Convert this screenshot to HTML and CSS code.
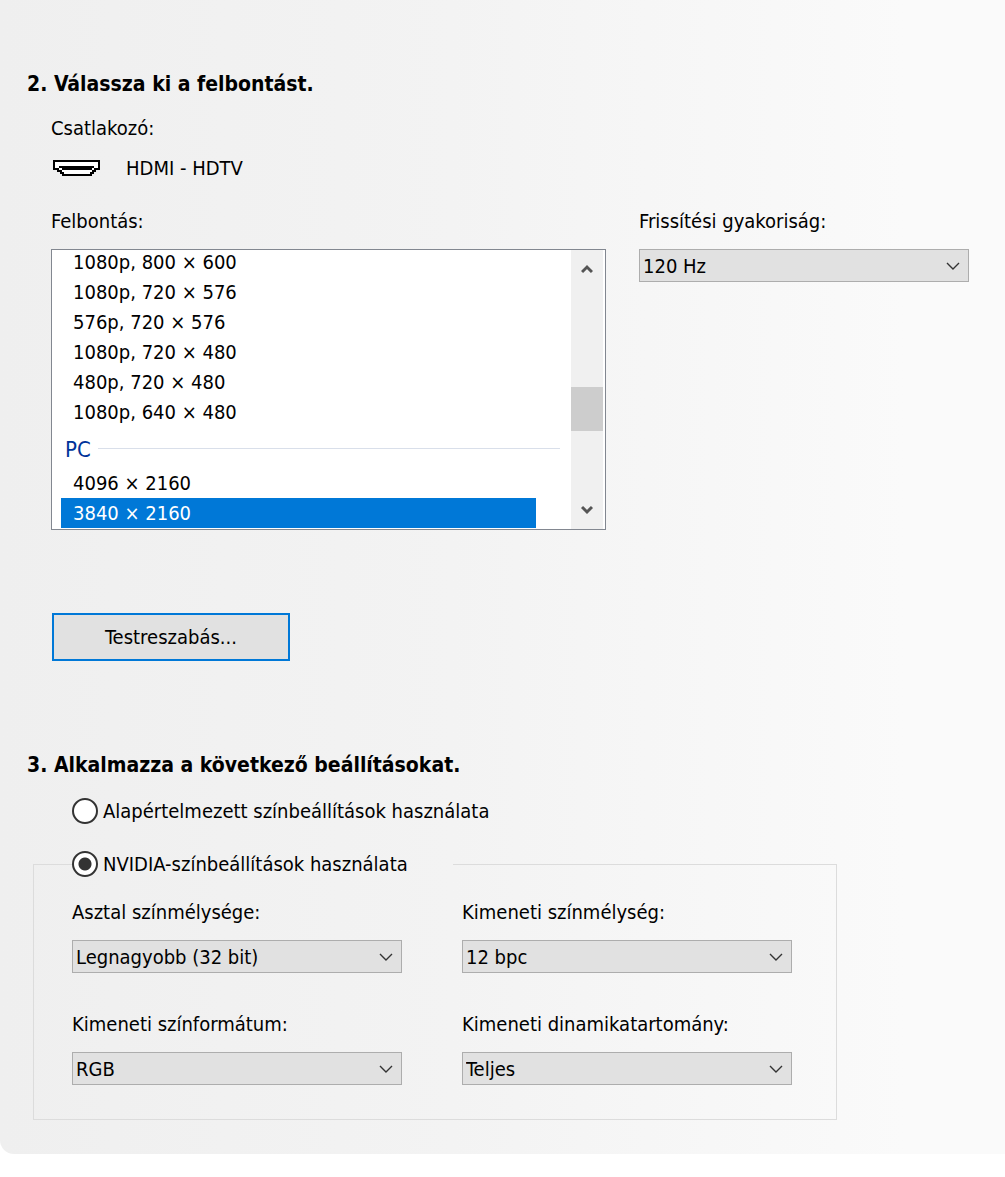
FILE: index.html
```
<!DOCTYPE html>
<html lang="hu">
<head>
    <meta charset="UTF-8">
    <title>Felbontás módosítása</title>
    <link rel="stylesheet" href="styles.css">
</head>
<body>
    <form class="panel">
        <h2>2. Válassza ki a felbontást.</h2>
        <div class="step">
            <p class="label">Csatlakozó:</p>
            <div class="connector">
                <svg width="48" height="18" viewBox="0 0 48 18" shape-rendering="crispEdges">
                    <path d="M1 2H46V10H42V12H40V14H38V16H10V14H8V12H5V10H1Z" fill="#fff" stroke="#000" stroke-width="2"/>
                    <path d="M6 7H41V9H39V11H9V9H6Z" fill="#000"/>
                </svg>
                <span>HDMI - HDTV</span>
            </div>
            <div class="mode">
                <div>
                    <label class="label" for="resolution">Felbontás:</label>
                    <div class="list">
                        <select id="resolution" size="9">
                            <option>1080p, 800 × 600</option>
                            <option>1080p, 720 × 576</option>
                            <option>576p, 720 × 576</option>
                            <option>1080p, 720 × 480</option>
                            <option>480p, 720 × 480</option>
                            <option>1080p, 640 × 480</option>
                            <optgroup label="PC">
                                <option>4096 × 2160</option>
                                <option selected>3840 × 2160</option>
                            </optgroup>
                        </select>
                        <div class="scrollbar">
                            <button type="button" aria-label="Fel">
                                <svg width="12" height="10" viewBox="0 0 12 10"><path d="M1 8L6 3L11 8" fill="none" stroke="#555" stroke-width="3"/></svg>
                            </button>
                            <div class="track"><div class="thumb"></div></div>
                            <button type="button" aria-label="Le">
                                <svg width="12" height="10" viewBox="0 0 12 10"><path d="M1 2L6 7L11 2" fill="none" stroke="#555" stroke-width="3"/></svg>
                            </button>
                        </div>
                    </div>
                </div>
                <div>
                    <label class="label" for="refresh">Frissítési gyakoriság:</label>
                    <div class="combo">
                        <select id="refresh"><option>120 Hz</option></select>
                        <svg width="14" height="8" viewBox="0 0 14 8"><path d="M1 1L7 7L13 1"/></svg>
                    </div>
                </div>
            </div>
            <button type="button" class="customize">Testreszabás...</button>
        </div>

        <h2>3. Alkalmazza a következő beállításokat.</h2>
        <label class="radio default"><input type="radio" name="color">Alapértelmezett színbeállítások használata</label>
        <fieldset>
            <legend><label class="radio"><input type="radio" name="color" checked>NVIDIA-színbeállítások használata</label></legend>
            <div class="settings">
                <div>
                    <label class="label" for="depth">Asztal színmélysége:</label>
                    <div class="combo">
                        <select id="depth"><option>Legnagyobb (32 bit)</option></select>
                        <svg width="14" height="8" viewBox="0 0 14 8"><path d="M1 1L7 7L13 1"/></svg>
                    </div>
                </div>
                <div>
                    <label class="label" for="output">Kimeneti színmélység:</label>
                    <div class="combo">
                        <select id="output"><option>12 bpc</option></select>
                        <svg width="14" height="8" viewBox="0 0 14 8"><path d="M1 1L7 7L13 1"/></svg>
                    </div>
                </div>
                <div>
                    <label class="label" for="format">Kimeneti színformátum:</label>
                    <div class="combo">
                        <select id="format"><option>RGB</option></select>
                        <svg width="14" height="8" viewBox="0 0 14 8"><path d="M1 1L7 7L13 1"/></svg>
                    </div>
                </div>
                <div>
                    <label class="label" for="range">Kimeneti dinamikatartomány:</label>
                    <div class="combo">
                        <select id="range"><option>Teljes</option></select>
                        <svg width="14" height="8" viewBox="0 0 14 8"><path d="M1 1L7 7L13 1"/></svg>
                    </div>
                </div>
            </div>
        </fieldset>
    </form>
</body>
</html>
```
FILE: styles.css
```
* {
    box-sizing: border-box;
}

body, h2, p, fieldset, legend {
    margin: 0;
    padding: 0;
}

body {
    background: #fff;
}

body, select, button, option {
    font-family: Tahoma, "DejaVu Sans Condensed", "Noto Sans", sans-serif;
    font-size: 20px;
    line-height: 30px;
    color: #000;
}

svg {
    display: block;
}

.panel {
    padding: 69px 36px 34px 27px;
    background: linear-gradient(to right, #efefef, #f3f3f3 45%, #fafafa 90%);
    border-bottom-left-radius: 14px;
}

h2 {
    font-size: 21px;
    line-height: 30px;
}

.step {
    padding: 14px 0 89px 24px;
}

.label {
    display: block;
}

.connector {
    display: flex;
    align-items: center;
    gap: 25px;
    padding: 10px 0 23px 2px;
}

.mode {
    display: grid;
    grid-template-columns: 1fr 330px;
    gap: 33px;
}

.list {
    display: flex;
    height: 281px;
    margin-top: 13px;
    padding-right: 2px;
    border: 1px solid #828790;
    background: #fff;
    overflow: hidden;
}

/* list is scrolled slightly, the first row is cut */
.list select {
    flex: 1;
    height: 280px;
    margin: -2px 11px 0 0;
    padding: 0 0 0 9px;
    border: 0;
    outline: 0;
    background: #fff;
    overflow: hidden;
    border-radius: 0;
}

.list option {
    height: 30px;
    min-height: 30px;
    margin-right: 24px;
    padding: 3px 12px 0;
}

.list option:checked {
    background: #0078d7 linear-gradient(#0078d7, #0078d7);
    color: #fff;
}

.list optgroup {
    padding: 10px 0 0 2px;
    font-family: Tahoma, "DejaVu Sans Condensed", "Noto Sans", sans-serif;
    font-size: 22px;
    font-weight: normal;
    color: #003399;
    /* line after the group name */
    background: linear-gradient(#d9dfea, #d9dfea) 37px 21px / 100% 1px no-repeat;
}

.list optgroup option {
    margin-left: -2px;
}

.list optgroup option:first-of-type {
    margin-top: 4px;
}

.scrollbar {
    display: flex;
    flex-direction: column;
    width: 32px;
    background: #f0f0f0;
}

.scrollbar button {
    display: flex;
    justify-content: center;
    align-items: center;
    height: 38px;
    padding: 0;
    border: 0;
    background: none;
}

.track {
    flex: 1;
    padding-top: 99px;
}

.thumb {
    height: 44px;
    background: #cdcdcd;
}

.combo {
    position: relative;
    margin-top: 13px;
}

.combo select {
    display: block;
    appearance: none;
    width: 100%;
    height: 33px;
    padding: 0 30px 0 3px;
    border: 1px solid #adadad;
    border-radius: 0;
    background: #e1e1e1;
}

.combo svg {
    position: absolute;
    right: 9px;
    top: 13px;
    pointer-events: none;
}

.combo path {
    fill: none;
    stroke: #333;
    stroke-width: 1.4;
}

.customize {
    width: 238px;
    height: 48px;
    margin: 83px 0 0 1px;
    border: 2px solid #0078d7;
    background: #e1e1e1;
}

.radio {
    display: flex;
    align-items: center;
    gap: 5px;
}

.radio input {
    appearance: none;
    width: 26px;
    height: 26px;
    margin: 0;
    border: 2px solid #333;
    border-radius: 50%;
    background: #fff;
}

.radio input:checked {
    background: radial-gradient(circle, #333 6px, #fff 7px);
}

.default {
    margin: 16px 0 23px 45px;
}

fieldset {
    max-width: 804px;
    margin-left: 6px;
    border: 1px solid #dcdcdc;
}

legend {
    margin-left: 38px;
    padding-right: 45px;
}

.settings {
    display: grid;
    grid-template-columns: 1fr 1fr;
    gap: 36px 60px;
    padding: 18px 44px 34px 38px;
}
```
